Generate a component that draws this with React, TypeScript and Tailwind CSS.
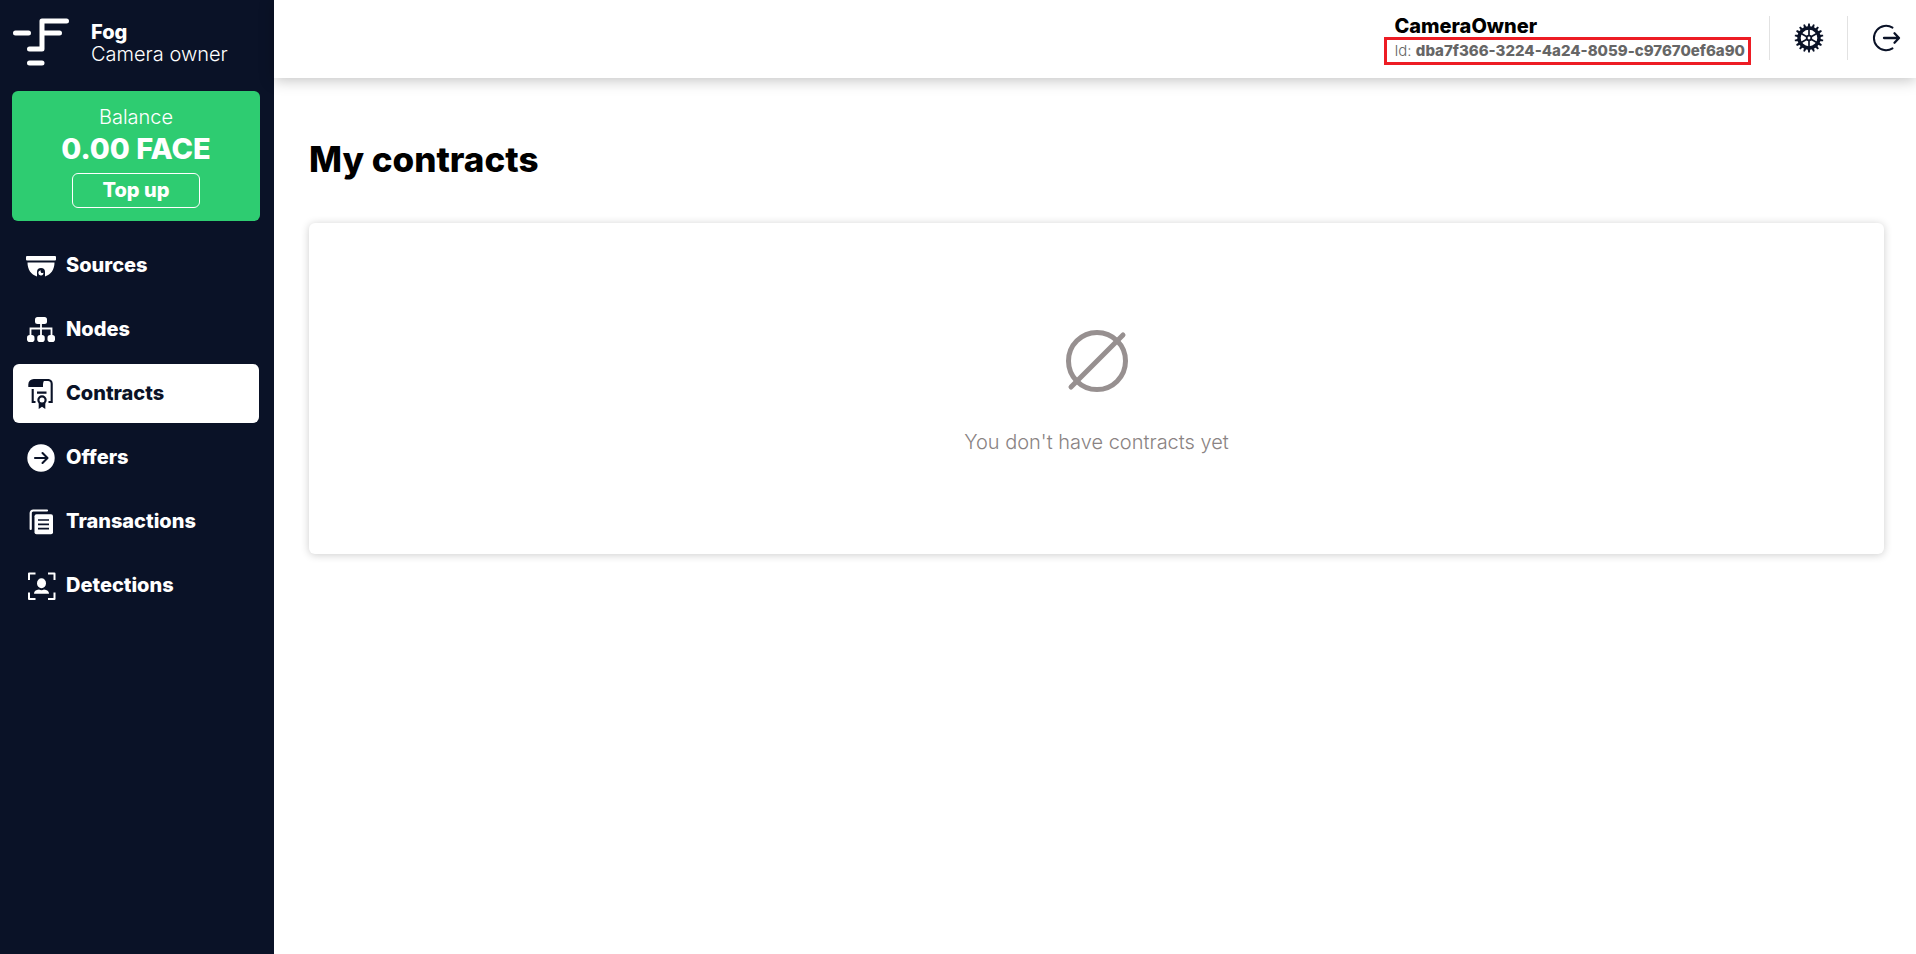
import type { ReactNode } from "react";

function Logo() {
  return (
    <svg viewBox="0 0 56 48" className="h-12 w-14 shrink-0" fill="none" stroke="#fff" strokeWidth="5" strokeLinecap="round" strokeLinejoin="round" aria-hidden="true">
      <path d="M2.500 15h13M53.500 3H29v28H16.500M29 15h17.500M16.500 45H29" />
    </svg>
  );
}

function SourcesIcon() {
  return (
    <svg viewBox="0 0 30 30" className="size-[30px]" fill="currentColor" aria-hidden="true">
      <rect x="0" y="5" width="30" height="4.500" rx="1" />
      <path d="M1.500 11.500h27c0 7-3.500 12-9.500 14v-4.500a4 4 0 0 0-8 0v4.500C5 23.500 1.500 18.500 1.500 11.500Z" />
      <path d="M15 19.500a1.500 1.500 0 0 0 2.300 2 2.500 2.500 0 1 1-2.300-2Z" />
    </svg>
  );
}

function NodesIcon() {
  return (
    <svg viewBox="0 0 30 30" className="size-[30px]" fill="currentColor" aria-hidden="true">
      <rect x="9" y="2" width="12" height="7" rx="2.500" />
      <path d="M4.500 21v-7.500h21V21M15 8v13" fill="none" stroke="currentColor" strokeWidth="1.800" />
      <rect x="1" y="20" width="7.500" height="7" rx="2.800" />
      <rect x="11.250" y="20" width="7.500" height="7" rx="2.800" />
      <rect x="21.500" y="20" width="7.500" height="7" rx="2.800" />
    </svg>
  );
}

function ContractsIcon() {
  return (
    <svg viewBox="0 0 30 30" className="size-[30px]" fill="currentColor" aria-hidden="true">
      <path d="M2.300 8V5.500A5.500 5.500 0 0 1 7.800 0H21c-3 .8-4 3-4 5.500V8Z" />
      <path d="M18 1h4a3.700 3.700 0 0 1 3.700 3.700V23H22.500M6.700 10v13H9.500M11 13.600h9.500" fill="none" stroke="currentColor" strokeWidth="2.100" />
      <circle cx="16" cy="21" r="3.600" fill="none" stroke="currentColor" strokeWidth="2.200" />
      <path d="M12.700 24h6.600v6L16 27.800 12.700 30Z" />
    </svg>
  );
}

function OffersIcon() {
  return (
    <svg viewBox="0 0 30 30" className="size-[30px]" aria-hidden="true">
      <circle cx="15" cy="15" r="13.700" fill="currentColor" />
      <path d="M9 15h12M16.500 10l5 5-5 5" fill="none" stroke="#0a1227" strokeWidth="2.100" strokeLinecap="round" strokeLinejoin="round" />
    </svg>
  );
}

function TransactionsIcon() {
  return (
    <svg viewBox="0 0 30 30" className="size-[30px]" aria-hidden="true">
      <path d="M4.700 22V6a2.500 2.500 0 0 1 2.500-2.500H21" fill="none" stroke="currentColor" strokeWidth="2.200" strokeLinecap="round" />
      <rect x="8.500" y="7.300" width="18.500" height="20" rx="2" fill="currentColor" />
      <path d="M12 13h11M12 17.300h11M12 21.600h11" fill="none" stroke="#0a1227" strokeWidth="1.700" />
    </svg>
  );
}

function DetectionsIcon() {
  return (
    <svg viewBox="0 0 30 30" className="size-[30px]" fill="currentColor" aria-hidden="true">
      <path d="M3 9V2.500h6.500M22 2.500h6.500V9M28.500 21.500V28H22M9.500 28H3v-6.500" fill="none" stroke="currentColor" strokeWidth="2" strokeLinejoin="round" />
      <ellipse cx="15.500" cy="12.300" rx="4.500" ry="5" />
      <path d="M8 22.800c0-2.600 1.800-4 5-4.300 1.500 1 3.500 1 5 0 3.200.3 5 1.700 5 4.300Z" />
    </svg>
  );
}

const teeth = Array.from({ length: 18 }, (_, i) => i * 20);
const spokes = [0, 60, 120, 180, 240, 300];

function GearIcon() {
  return (
    <svg viewBox="0 0 30 30" className="size-[30px]" fill="none" stroke="#0a1227" aria-hidden="true">
      <circle cx="15" cy="15" r="10" strokeWidth="3.400" />
      <circle cx="15" cy="15" r="2.300" strokeWidth="1.800" />
      {teeth.map((a) => (
        <path key={a} d="M13.700 4l.5-3.400h1.600l.5 3.400Z" fill="#0a1227" strokeWidth="0" transform={`rotate(${a} 15 15)`} />
      ))}
      {spokes.map((a) => (
        <path key={a} d="M15 12.500V5" strokeWidth="1.700" transform={`rotate(${a} 15 15)`} />
      ))}
    </svg>
  );
}

function LogoutIcon() {
  return (
    <svg viewBox="0 0 30 30" className="size-[30px]" fill="none" stroke="#0a1227" strokeWidth="2" strokeLinecap="round" strokeLinejoin="round" aria-hidden="true">
      <path d="M21.500 4.600A12.200 12.200 0 1 0 21.500 25.400" />
      <path d="M13 15h14.500M23.500 10.300l4.500 4.700-4.500 4.700" strokeWidth="2.300" />
    </svg>
  );
}

function EmptyIcon() {
  return (
    <svg viewBox="0 0 64 64" className="size-16" fill="none" stroke="#979090" strokeWidth="5" strokeLinecap="round" aria-hidden="true">
      <circle cx="32" cy="32" r="28.500" />
      <path d="M6 58 58 6" />
    </svg>
  );
}

const items: { label: string; icon: ReactNode; active?: boolean }[] = [
  { label: "Sources", icon: <SourcesIcon /> },
  { label: "Nodes", icon: <NodesIcon /> },
  { label: "Contracts", icon: <ContractsIcon />, active: true },
  { label: "Offers", icon: <OffersIcon /> },
  { label: "Transactions", icon: <TransactionsIcon /> },
  { label: "Detections", icon: <DetectionsIcon /> },
];

export default function App() {
  return (
    <div className="flex min-h-screen bg-white font-[Inter,sans-serif] text-black">
      <aside className="flex w-[274px] shrink-0 flex-col bg-[#0a1227] text-white">
        <div className="flex h-[91px] items-start gap-[22px] px-[13px] pt-[18px]">
          <Logo />
          <div className="pt-[3px] text-[20px] leading-[22px]">
            <div className="font-extrabold">Fog</div>
            <div className="font-light">Camera owner</div>
          </div>
        </div>

        <section className="mx-3 flex w-[248px] flex-col items-center rounded-md bg-[#2ecc71] pt-3 pb-[13px]">
          <div className="text-[20px] leading-7 font-light">Balance</div>
          <div className="text-[29px] leading-9 font-extrabold">0.00 FACE</div>
          <button type="button" className="mt-[6px] h-[35px] w-32 rounded-md border border-white pb-[2px] text-[20px] leading-6 font-extrabold">
            Top up
          </button>
        </section>

        <nav className="mt-[15px] flex flex-col gap-[5px] px-[13px]">
          {items.map((item) => (
            <a
              key={item.label}
              href="#"
              aria-current={item.active ? "page" : undefined}
              className={
                item.active
                  ? "flex h-[59px] w-[246px] items-center gap-[10px] rounded-md bg-white px-[13px] pb-[2px] text-[20px] font-extrabold text-[#0a1227]"
                  : "flex h-[59px] w-[246px] items-center gap-[10px] rounded-md px-[13px] pb-[2px] text-[20px] font-extrabold"
              }
            >
              <span className="pt-[2px]">{item.icon}</span>
              {item.label}
            </a>
          ))}
        </nav>
      </aside>

      <div className="flex min-w-0 flex-1 flex-col">
        <header className="flex h-[78px] items-start justify-end shadow-[0_2px_14px_rgba(0,0,0,0.25)]">
          <div className="mr-[18px] pt-4">
            <div className="pl-[10px] text-[20px] leading-[21px] font-extrabold">CameraOwner</div>
            <div className="border-3 border-[#ed1c24] pr-[3px] pl-[7px] text-[15px] leading-[22px] text-[#666]">
              <span className="font-light">Id: </span>
              <span className="font-extrabold">dba7f366-3224-4a24-8059-c97670ef6a90</span>
            </div>
          </div>
          <div className="mt-4 flex h-11 w-[78px] items-center justify-center border-l border-[#e2e2e2]">
            <button type="button" aria-label="Settings">
              <GearIcon />
            </button>
          </div>
          <div className="mt-4 flex h-11 w-[69px] items-center justify-end border-l border-[#e2e2e2] pr-[15px]">
            <button type="button" aria-label="Log out">
              <LogoutIcon />
            </button>
          </div>
        </header>

        <main className="pt-[61px] pr-8 pl-[35px]">
          <h1 className="text-[35px] leading-10 font-extrabold">My contracts</h1>
          <section className="mt-[44px] flex h-[331px] flex-col items-center rounded-md bg-white pt-[106px] shadow-[0_1px_8px_rgba(0,0,0,0.2)]">
            <EmptyIcon />
            <p className="mt-[35px] text-[20px] leading-7 font-light text-[#8a8383]">You don't have contracts yet</p>
          </section>
        </main>
      </div>
    </div>
  );
}
